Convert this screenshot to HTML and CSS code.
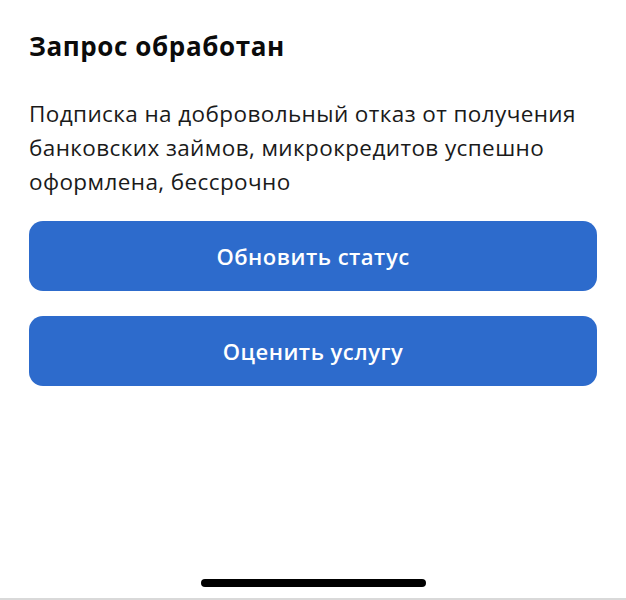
FILE: index.html
```html
<!DOCTYPE html>
<html lang="ru">
<head>
<meta charset="utf-8">
<link rel="stylesheet" href="styles.css">
</head>
<body>
<div class="screen">
  <main class="content">
    <h1 class="title">Запрос обработан</h1>
    <p class="text">Подписка на добровольный отказ от получения банковских займов, микрокредитов успешно оформлена, бессрочно</p>
    <div class="actions">
      <button class="btn">Обновить статус</button>
      <button class="btn">Оценить услугу</button>
    </div>
  </main>
  <div class="home-bar"><span class="home-indicator"></span></div>
</div>
</body>
</html>
```
FILE: styles.css
```css
* { box-sizing: border-box; }
html, body { margin: 0; padding: 0; background: #fff; }
body { font-family: "Open Sans", "Noto Sans", sans-serif; color: #111; }
.screen {
  width: 626px;
  height: 600px;
  display: flex;
  flex-direction: column;
  border-bottom: 2px solid #d9d9d9;
}
.content {
  flex: 1;
  padding: 28px 29px 0 29px;
}
.title {
  margin: 0;
  font-size: 26px;
  font-weight: 700;
  letter-spacing: 0.6px;
  line-height: 36px;
  color: #0b0b0b;
}
.text {
  margin: 33px 0 0 0;
  font-size: 22.5px;
  letter-spacing: 0.4px;
  line-height: 34px;
  color: #1a1a1a;
}
.actions {
  margin-top: 22px;
  display: flex;
  flex-direction: column;
  gap: 25px;
}
.btn {
  height: 70px;
  border: 0;
  border-radius: 14px;
  background: #2d6bcc;
  color: #fff;
  font-family: inherit;
  font-size: 22px;
  font-weight: 600;
  letter-spacing: 0.5px;
}
.home-bar {
  height: 19px;
  display: flex;
  justify-content: center;
}
.home-indicator {
  width: 225px;
  height: 8px;
  border-radius: 4px;
  background: #000;
}
```
